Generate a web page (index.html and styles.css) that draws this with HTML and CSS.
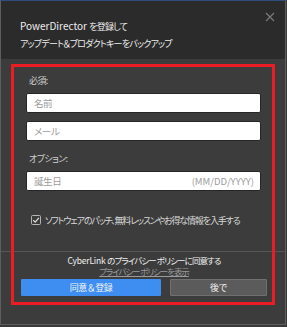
FILE: index.html
```html
<!DOCTYPE html>
<html lang="ja">
<head>
    <meta charset="UTF-8">
    <title>PowerDirector 登録</title>
    <link rel="stylesheet" href="styles.css">
</head>
<body>
    <div class="dialog">
        <header class="dialog-header">
            <div class="title">
                <p><span class="en">PowerDirector </span>を登録して</p>
                <p>アップデート＆プロダクトキーをバックアップ</p>
            </div>
            <svg class="close" width="10" height="10" viewBox="0 0 10 10">
                <path d="M1 1 L9 9 M9 1 L1 9" stroke="#7a7a7a" stroke-width="1.2" fill="none"/>
            </svg>
        </header>

        <main class="form">
            <p class="label">必須:</p>
            <div class="field"><span class="placeholder jp">名前</span></div>
            <div class="field second"><span class="placeholder jp">メール</span></div>

            <p class="label optional">オプション:</p>
            <div class="field"><span class="placeholder jp">誕生日</span><span class="placeholder">(MM/DD/YYYY)</span></div>

            <div class="check-row">
                <svg class="checkbox" width="10" height="10" viewBox="0 0 10 10">
                    <rect x="0.5" y="0.5" width="9" height="9" rx="1" fill="#3c3c3c" stroke="#b4b4b4"/>
                    <path d="M2.2 5.2 L4.2 7.2 L7.9 2.9" stroke="#e0e0e0" stroke-width="1.2" fill="none"/>
                </svg>
                <span>ソフトウェアのパッチ、無料レッスンやお得な情報を入手する</span>
            </div>
        </main>

        <footer class="dialog-footer">
            <p class="policy"><span class="en">CyberLink </span>のプライバシー ポリシーに同意する</p>
            <p class="policy-link">プライバシー ポリシーを表示</p>
            <div class="buttons">
                <button class="btn primary">同意＆登録</button>
                <button class="btn secondary">後で</button>
            </div>
        </footer>

        <div class="highlight"></div>
    </div>
</body>
</html>
```

FILE: styles.css
```css
body {
    margin: 0;
    background-color: #3a3a3a;
    font-family: "Noto Sans CJK JP", "Noto Sans", sans-serif;
    font-feature-settings: "palt";
    color: #e6e6e6;
}

p {
    margin: 0;
}

.dialog {
    position: relative;
    width: 284px;
    height: 323px;
    border: 1px solid #5e5e5e;
    border-top-color: #2e4d7c;
    background-color: #3c3c3c;
}

.dialog-header {
    display: flex;
    justify-content: space-between;
    align-items: flex-start;
    height: 58px;
    padding: 0 10px 0 19px;
    background-color: #2b2b2b;
    box-sizing: border-box;
}

.title {
    margin-top: 16px;
    font-size: 9px;
    line-height: 17px;
    letter-spacing: -0.8px;
    color: #eeeeee;
    white-space: nowrap;
}

.title .en {
    font-size: 10px;
    letter-spacing: 0;
}

.close {
    margin-top: 11px;
}

.form {
    padding: 15px 24px 24px 25px;
    border-bottom: 1px solid #565656;
}

.label {
    font-size: 9px;
    line-height: 14px;
    letter-spacing: -0.6px;
    color: #cfcfcf;
    padding-left: 3px;
}

.label.optional {
    margin-top: 11px;
}

.field {
    display: flex;
    justify-content: space-between;
    align-items: center;
    height: 20px;
    margin-top: 5px;
    padding: 0 6px 0 7px;
    background-color: #ffffff;
    border: 1px solid #262626;
    border-radius: 2px;
    box-sizing: border-box;
}

.field.second {
    margin-top: 8px;
}

.placeholder {
    font-size: 9.5px;
    color: #9c9c9c;
}

.placeholder.jp {
    letter-spacing: -0.4px;
}

.check-row {
    display: flex;
    align-items: center;
    gap: 4px;
    height: 14px;
    margin-top: 22px;
    padding-left: 5px;
    font-size: 9px;
    letter-spacing: -1.15px;
    color: #d8d8d8;
    white-space: nowrap;
}

.dialog-footer {
    padding: 3px 18px 0 20px;
    text-align: center;
    white-space: nowrap;
}

.policy {
    font-size: 8.5px;
    line-height: 11px;
    letter-spacing: -0.9px;
    color: #f0f0f0;
}

.policy .en {
    letter-spacing: -0.2px;
}

.policy-link {
    font-size: 8.5px;
    line-height: 11px;
    letter-spacing: -1.1px;
    color: #9a9a9a;
    text-decoration: underline;
}

.buttons {
    display: flex;
    gap: 9px;
    margin-top: 2px;
}

.btn {
    height: 17px;
    padding: 0;
    font-family: inherit;
    font-size: 9px;
    letter-spacing: -0.5px;
    color: #f2f2f2;
    border-radius: 1px;
}

.primary {
    width: 140px;
    background-color: #3e8ef2;
    border: none;
}

.secondary {
    flex: 1;
    background-color: #5b5b5b;
    border: 1px solid #707070;
}

.highlight {
    position: absolute;
    left: 10px;
    top: 63px;
    width: 258px;
    height: 235px;
    border: 3px solid #ec1c24;
    pointer-events: none;
}
```
